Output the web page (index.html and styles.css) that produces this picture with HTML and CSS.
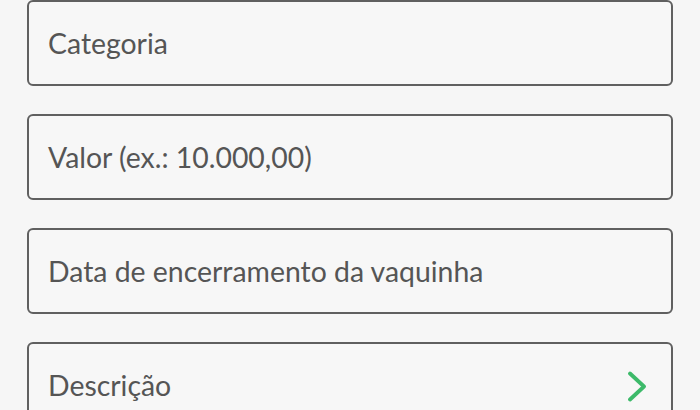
FILE: index.html
```html
<!DOCTYPE html>
<html lang="pt">
<head>
<meta charset="utf-8">
<link rel="stylesheet" href="styles.css">
</head>
<body>
<div class="form">
  <div class="field"><span class="label">Categoria</span></div>
  <div class="field"><span class="label">Valor (ex.: 10.000,00)</span></div>
  <div class="field"><span class="label">Data de encerramento da vaquinha</span></div>
  <div class="field"><span class="label">Descrição</span>
    <svg class="chev" width="24" height="32" viewBox="0 0 24 32"><path d="M4 3.5 L18 16.5 L4 29.5" fill="none" stroke="#3dba6a" stroke-width="3.8" stroke-linecap="round" stroke-linejoin="round"/></svg>
  </div>
</div>
</body>
</html>
```
FILE: styles.css
```css
html, body {
  margin: 0;
  padding: 0;
  background: #f6f6f6;
  width: 700px;
  height: 410px;
  overflow: hidden;
}
.form {
  display: flex;
  flex-direction: column;
  gap: 28px;
  padding: 0 27px 0 27px;
}
.field {
  box-sizing: border-box;
  height: 86px;
  border: 2px solid #606060;
  border-radius: 6px;
  background: #f7f7f7;
  display: flex;
  align-items: center;
  justify-content: space-between;
  padding: 0 21px 0 19px;
  flex-shrink: 0;
}
.label {
  font-family: Lato, "Liberation Sans", sans-serif;
  font-size: 28.4px;
  color: #555;
  padding-bottom: 1px;
}
.chev {
  display: block;
  margin-top: 2px;
}
```
